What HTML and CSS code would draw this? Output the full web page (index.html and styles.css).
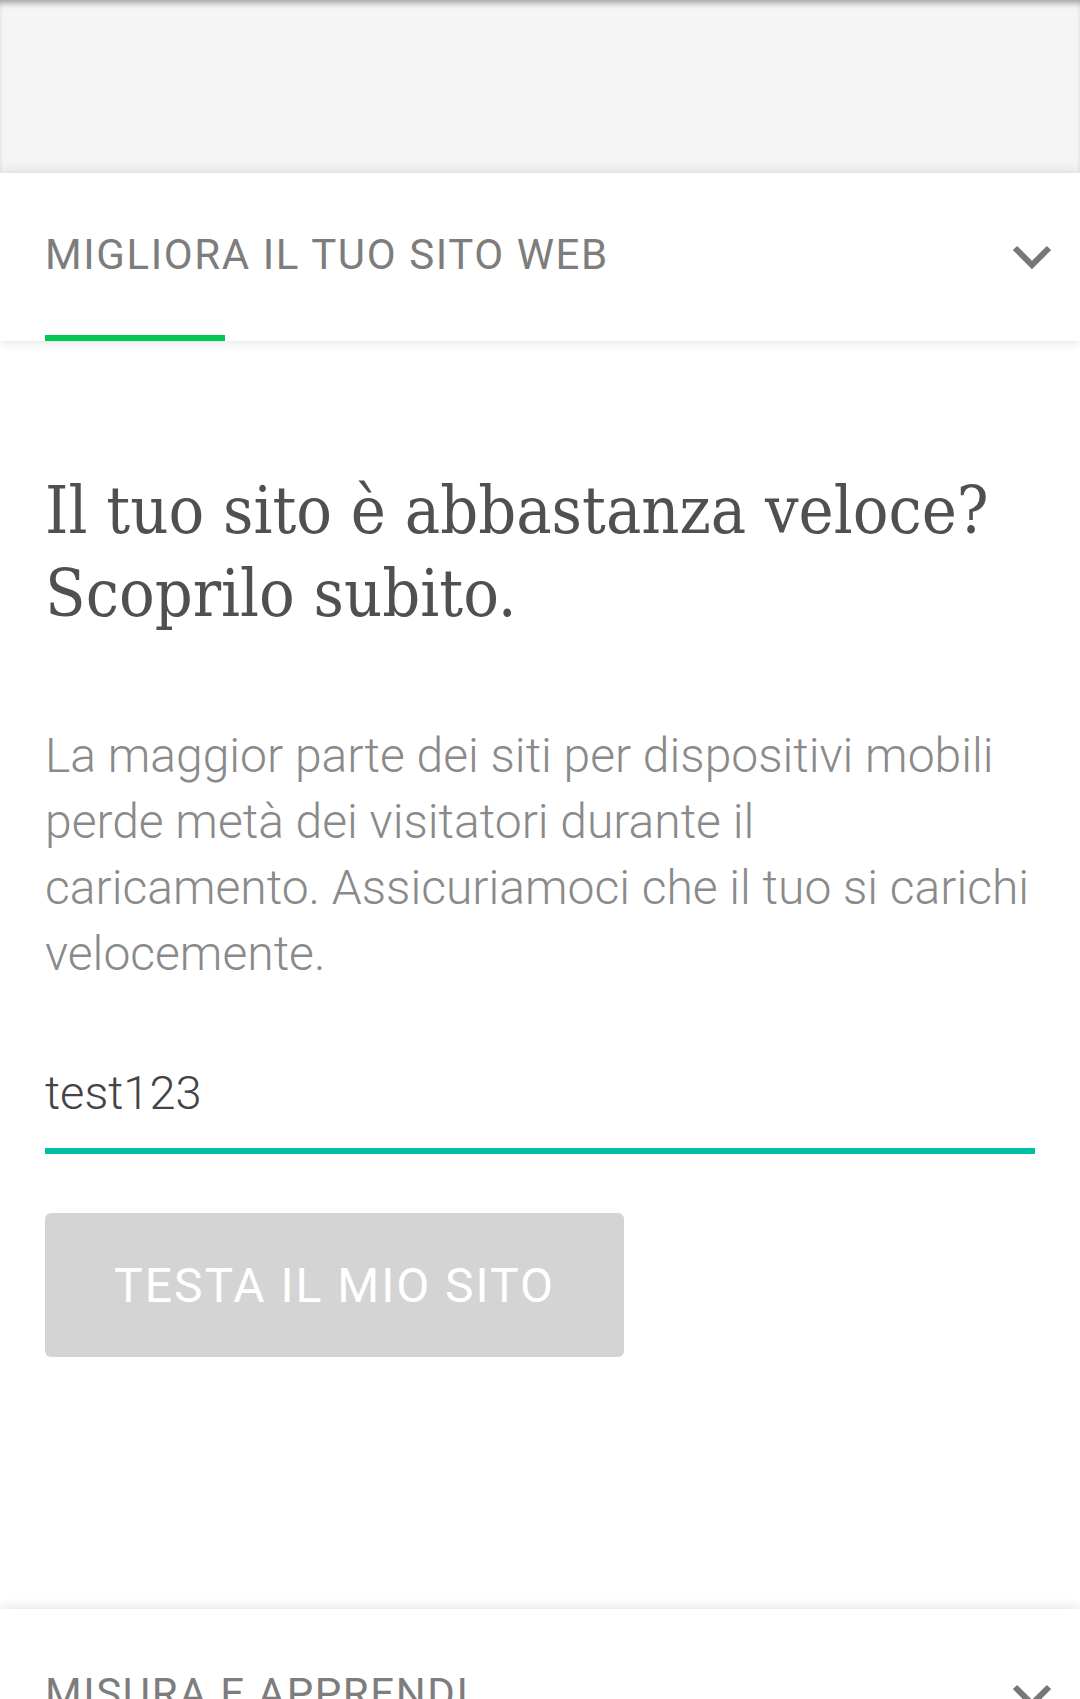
FILE: index.html
```html
<!DOCTYPE html>
<html lang="it">
<head>
<meta charset="utf-8">
<title>Migliora il tuo sito web</title>
<link rel="stylesheet" href="styles.css">
</head>
<body>
<div class="page">
  <div class="topbar"></div>
  <section class="acc-header">
    <div class="acc-row">
      <span class="acc-title">MIGLIORA IL TUO SITO WEB</span>
      <svg class="chev" width="40" height="26" viewBox="0 0 40 26"><polyline points="3,3 20,20 37,3" fill="none" stroke="#777" stroke-width="6"/></svg>
    </div>
    <div class="acc-bar"></div>
  </section>
  <main class="content">
    <h1 class="headline">Il tuo sito è abbastanza veloce? Scoprilo subito.</h1>
    <p class="lead">La maggior parte dei siti per dispositivi mobili perde metà dei visitatori durante il caricamento. Assicuriamoci che il tuo si carichi velocemente.</p>
    <div class="field">test123</div>
    <button class="cta" type="button">TESTA IL MIO SITO</button>
  </main>
  <section class="acc-header">
    <div class="acc-row">
      <span class="acc-title">MISURA E APPRENDI</span>
      <svg class="chev" width="40" height="26" viewBox="0 0 40 26"><polyline points="3,3 20,20 37,3" fill="none" stroke="#777" stroke-width="6"/></svg>
    </div>
  </section>
</div>
</body>
</html>
```
FILE: styles.css
```css
html, body {
  margin: 0;
  padding: 0;
  background: #fff;
}
body {
  width: 1080px;
  height: 1699px;
  overflow: hidden;
  font-family: Roboto, "Noto Sans", sans-serif;
}
.page {
  display: flex;
  flex-direction: column;
}
.topbar {
  height: 173px;
  background: #f5f5f5;
  box-shadow: inset 0 6px 6px -3px rgba(0,0,0,0.35);
}
.acc-header {
  position: relative;
  z-index: 1;
  background: #fff;
  box-shadow: 0 0 12px rgba(0,0,0,0.14);
  height: 168px;
  display: flex;
  flex-direction: column;
  padding: 0 28px 0 45px;
}
.acc-row {
  flex: 1;
  display: flex;
  align-items: center;
  justify-content: space-between;
}
.acc-title {
  font-size: 42px;
  letter-spacing: 1.6px;
  color: #7d7d7d;
}
.chev {
  display: block;
  margin-top: 8px;
}
.acc-bar {
  width: 180px;
  height: 6px;
  background: #00c853;
}
.content {
  padding: 128px 45px 252px 45px;
}
.headline {
  margin: 0;
  font-family: "DejaVu Serif Condensed", "DejaVu Serif", serif;
  font-weight: normal;
  font-size: 66px;
  line-height: 83px;
  color: #505050;
}
.lead {
  margin: 88px 0 0 0;
  font-size: 48px;
  font-weight: 300;
  line-height: 66px;
  color: #8a8a8a;
}
.field {
  margin-top: 75px;
  font-size: 47px;
  font-weight: 300;
  line-height: 62px;
  color: #444;
  padding-bottom: 24px;
  border-bottom: 6px solid #00bfa5;
}
.cta {
  margin-top: 59px;
  width: 579px;
  height: 144px;
  border: 0;
  border-radius: 6px;
  background: #d4d4d4;
  color: #fff;
  font-family: Roboto, "Noto Sans", sans-serif;
  font-size: 48px;
  letter-spacing: 2px;
  padding: 0;
  display: block;
}
```
